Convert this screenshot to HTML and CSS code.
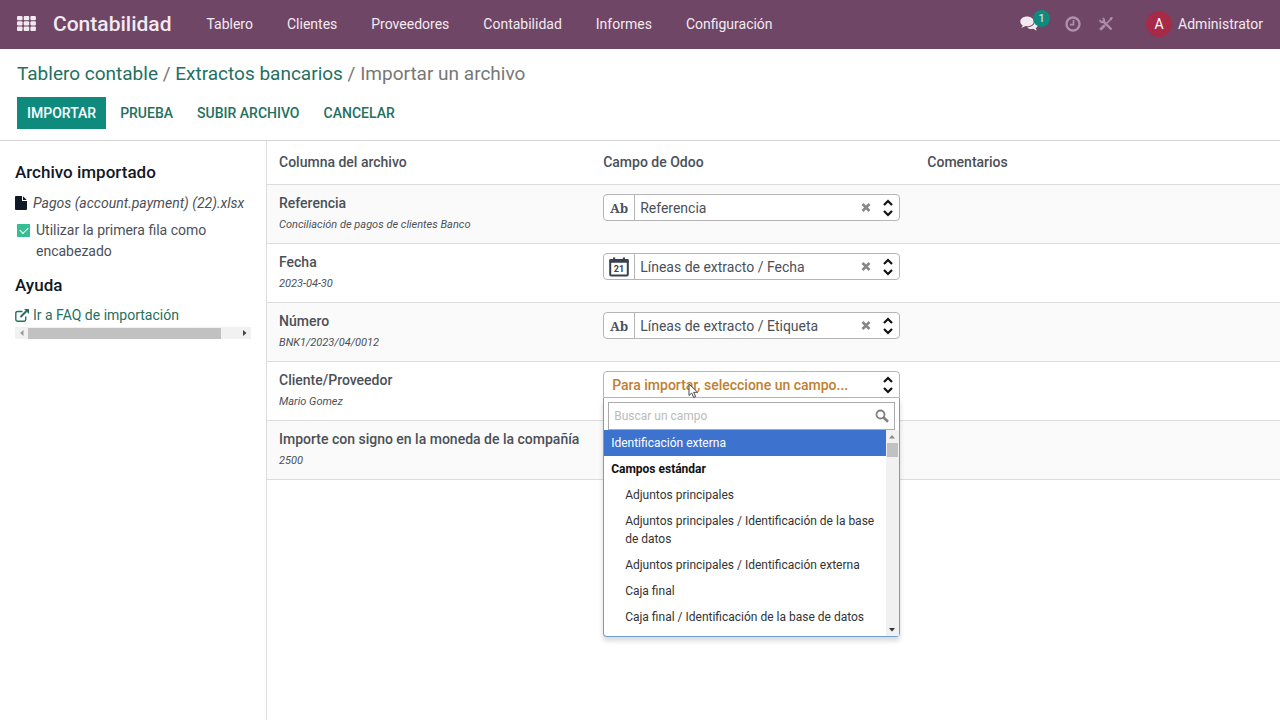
FILE: index.html
```html
<!DOCTYPE html>
<html lang="es">
<head>
    <meta charset="UTF-8">
    <meta name="viewport" content="width=device-width, initial-scale=1.0">
    <title>Importar un archivo</title>
    <link rel="stylesheet" href="styles.css">
</head>
<body>
    <header class="navbar">
        <button class="icon-btn apps-btn" aria-label="Aplicaciones">
            <svg width="19" height="15" viewBox="0 0 19 15" fill="currentColor">
                <rect x="0" y="0" width="5.500" height="4.300" rx="1"/><rect x="6.700" y="0" width="5.500" height="4.300" rx="1"/><rect x="13.400" y="0" width="5.500" height="4.300" rx="1"/>
                <rect x="0" y="5.300" width="5.500" height="4.300" rx="1"/><rect x="6.700" y="5.300" width="5.500" height="4.300" rx="1"/><rect x="13.400" y="5.300" width="5.500" height="4.300" rx="1"/>
                <rect x="0" y="10.600" width="5.500" height="4.300" rx="1"/><rect x="6.700" y="10.600" width="5.500" height="4.300" rx="1"/><rect x="13.400" y="10.600" width="5.500" height="4.300" rx="1"/>
            </svg>
        </button>
        <a class="brand" href="#">Contabilidad</a>
        <nav class="menu">
            <a href="#">Tablero</a>
            <a href="#">Clientes</a>
            <a href="#">Proveedores</a>
            <a href="#">Contabilidad</a>
            <a href="#">Informes</a>
            <a href="#">Configuración</a>
        </nav>
        <div class="systray">
            <button class="icon-btn chat-btn" aria-label="Mensajes">
                <svg width="18" height="15" viewBox="0 0 18 15" fill="currentColor">
                    <path d="M7 0.500C3.200 0.500 0.300 2.700 0.300 5.500c0 1.600 1 3 2.500 3.900-.3.900-.9 1.600-1.600 2.200 1.700 0 3.200-.7 4.300-1.500.5.1 1 .1 1.500.1 3.800 0 6.800-2.100 6.800-4.800S10.800.5 7 .5z"/>
                    <path d="M14.800 5.300c.2 3.400-3.300 6-7.600 6.100 1.100 1 2.800 1.500 4.700 1.500.5 0 .9 0 1.300-.1 1 .9 2.400 1.500 3.900 1.500-.6-.6-1.100-1.300-1.400-2.100 1.300-.8 2.100-1.900 2.100-3.200 0-1.500-1.200-2.900-3-3.700z"/>
                </svg>
                <span class="badge">1</span>
            </button>
            <button class="icon-btn muted clock-btn" aria-label="Actividades">
                <svg width="16" height="16" viewBox="0 0 16 16" fill="none" stroke="currentColor">
                    <circle cx="8" cy="8" r="6.500" stroke-width="2.400"/>
                    <path d="M8.500 4v4.700H5" stroke-width="1.700"/>
                </svg>
            </button>
            <button class="icon-btn muted tools-btn" aria-label="Herramientas">
                <svg width="14" height="14" viewBox="0 0 14 14" fill="none" stroke="currentColor">
                    <path d="M3.500 3.500L12.500 12.500" stroke-width="2.400"/>
                    <path d="M1 2.800a2.500 2.500 0 0 0 3.600 2.400A2.500 2.500 0 0 0 3.600 1" stroke-width="1.700"/>
                    <path d="M1.200 12.800L5.500 8.500" stroke-width="2.800"/>
                    <path d="M5.500 8.500L12 2M10.800 1.600l2-.8-.6 2.200" stroke-width="1.500"/>
                </svg>
            </button>
            <button class="user-btn"><span class="avatar">A</span>Administrator</button>
        </div>
    </header>

    <div class="control-panel">
        <nav class="breadcrumb">
            <a href="#">Tablero contable</a> / <a href="#">Extractos bancarios</a> / <span>Importar un archivo</span>
        </nav>
        <div class="actions">
            <button class="btn btn-primary">Importar</button>
            <button class="btn">Prueba</button>
            <button class="btn">Subir archivo</button>
            <button class="btn">Cancelar</button>
        </div>
    </div>

    <div class="content">
        <aside class="sidebar">
            <h2>Archivo importado</h2>
            <div class="file">
                <svg width="12" height="14" viewBox="0 0 12 14" fill="#111827">
                    <path d="M0 1Q0 0 1 0H7V4.500Q7 5 7.500 5H12V13Q12 14 11 14H1Q0 14 0 13zM8 0.300L11.700 4H8z"/>
                </svg>
                <em>Pagos (account.payment) (22).xlsx</em>
            </div>
            <div class="check">
                <input type="checkbox" id="headers" checked>
                <label for="headers">Utilizar la primera fila como encabezado</label>
            </div>
            <h2>Ayuda</h2>
            <a class="faq" href="#">
                <svg width="14" height="13" viewBox="0 0 14 13" fill="none" stroke="currentColor" stroke-width="1.400">
                    <path d="M7.500 2.500H2.500Q.8 2.500.8 4.200V10.500Q.8 12.200 2.500 12.200H9Q10.700 12.200 10.700 10.500V7.500"/>
                    <path d="M5.500 8L11.500 2" stroke-width="1.900"/>
                    <path d="M9 0H14V5z" fill="currentColor" stroke="none"/>
                </svg>
                Ir a FAQ de importación
            </a>
            <div class="scroll-x">
                <svg width="13" height="12" viewBox="0 0 13 12"><path d="M8.500 3v6L5 6z" fill="#999"/></svg>
                <span class="thumb"></span>
                <svg width="13" height="12" viewBox="0 0 13 12"><path d="M5 3v6l3.500-3z" fill="#444"/></svg>
            </div>
        </aside>

        <main class="mapping">
            <table>
                <thead>
                    <tr>
                        <th>Columna del archivo</th>
                        <th>Campo de Odoo</th>
                        <th>Comentarios</th>
                    </tr>
                </thead>
                <tbody>
                    <tr>
                        <td><label for="f1">Referencia</label><em>Conciliación de pagos de clientes Banco</em></td>
                        <td>
                            <div class="field">
                                <span class="type">Ab</span>
                                <select id="f1"><option>Referencia</option></select>
                                <button class="clear" aria-label="Quitar"><svg width="10" height="9" viewBox="0 0 10 9"><path d="M1.500 1l7 7M8.500 1l-7 7" stroke="#888" stroke-width="2.600"/></svg></button>
                                <svg class="arrows" width="10" height="18" viewBox="0 0 10 18"><path d="M1 6l4-4 4 4M1 12l4 4 4-4" fill="none" stroke="#111" stroke-width="2.200"/></svg>
                            </div>
                        </td>
                        <td></td>
                    </tr>
                    <tr>
                        <td><label for="f2">Fecha</label><em>2023-04-30</em></td>
                        <td>
                            <div class="field">
                                <span class="type">
                                    <svg width="20" height="20" viewBox="0 0 20 20">
                                        <rect x="1.200" y="3" width="17.600" height="15.500" rx="1" fill="none" stroke="#374151" stroke-width="2"/>
                                        <path d="M0.500 2.200h19v3.600H0.500zM4 0.500h2.200v3H4zM13.800 0.500H16v3h-2.200z" fill="#374151"/>
                                        <text x="10" y="15" class="cal-day">21</text>
                                    </svg>
                                </span>
                                <select id="f2"><option>Líneas de extracto / Fecha</option></select>
                                <button class="clear" aria-label="Quitar"><svg width="10" height="9" viewBox="0 0 10 9"><path d="M1.500 1l7 7M8.500 1l-7 7" stroke="#888" stroke-width="2.600"/></svg></button>
                                <svg class="arrows" width="10" height="18" viewBox="0 0 10 18"><path d="M1 6l4-4 4 4M1 12l4 4 4-4" fill="none" stroke="#111" stroke-width="2.200"/></svg>
                            </div>
                        </td>
                        <td></td>
                    </tr>
                    <tr>
                        <td><label for="f3">Número</label><em>BNK1/2023/04/0012</em></td>
                        <td>
                            <div class="field">
                                <span class="type">Ab</span>
                                <select id="f3"><option>Líneas de extracto / Etiqueta</option></select>
                                <button class="clear" aria-label="Quitar"><svg width="10" height="9" viewBox="0 0 10 9"><path d="M1.500 1l7 7M8.500 1l-7 7" stroke="#888" stroke-width="2.600"/></svg></button>
                                <svg class="arrows" width="10" height="18" viewBox="0 0 10 18"><path d="M1 6l4-4 4 4M1 12l4 4 4-4" fill="none" stroke="#111" stroke-width="2.200"/></svg>
                            </div>
                        </td>
                        <td></td>
                    </tr>
                    <tr>
                        <td><label for="f4">Cliente/Proveedor</label><em>Mario Gomez</em></td>
                        <td>
                            <div class="field open">
                                <select id="f4"><option>Para importar, seleccione un campo...</option></select>
                                <svg class="arrows" width="10" height="18" viewBox="0 0 10 18"><path d="M1 6l4-4 4 4M1 12l4 4 4-4" fill="none" stroke="#111" stroke-width="2.200"/></svg>
                                <svg class="cursor" width="11" height="16" viewBox="0 0 11 16"><path d="M1 1v11.500l2.700-2.500 2 4.500 2-.9-2-4.300H9.700z" fill="#fff" stroke="#444" stroke-width="1"/></svg>
                                <div class="dropdown">
                                    <div class="search">
                                        <input type="text" placeholder="Buscar un campo" aria-label="Buscar un campo">
                                        <svg width="14" height="14" viewBox="0 0 14 14" fill="none" stroke="#808080"><circle cx="5.500" cy="5.500" r="4" stroke-width="1.800"/><path d="M8.500 8.500L13 12.800" stroke-width="2.600"/></svg>
                                    </div>
                                    <div class="results">
                                        <ul>
                                            <li class="selected">Identificación externa</li>
                                            <li class="group">Campos estándar</li>
                                            <li class="sub">Adjuntos principales</li>
                                            <li class="sub">Adjuntos principales / Identificación de la base de datos</li>
                                            <li class="sub">Adjuntos principales / Identificación externa</li>
                                            <li class="sub">Caja final</li>
                                            <li class="sub">Caja final / Identificación de la base de datos</li>
                                        </ul>
                                        <div class="scroll-y">
                                            <svg width="12" height="13" viewBox="0 0 12 13"><path d="M3 8.500h6L6 5z" fill="#888"/></svg>
                                            <span class="thumb"></span>
                                            <svg width="12" height="13" viewBox="0 0 12 13"><path d="M3 5h6L6 8.500z" fill="#333"/></svg>
                                        </div>
                                    </div>
                                </div>
                            </div>
                        </td>
                        <td></td>
                    </tr>
                    <tr>
                        <td><label for="f5">Importe con signo en la moneda de la compañía</label><em>2500</em></td>
                        <td>
                            <div class="field">
                                <select id="f5" class="empty"><option>Para importar, seleccione un campo...</option></select>
                            </div>
                        </td>
                        <td></td>
                    </tr>
                </tbody>
            </table>
        </main>
    </div>
</body>
</html>
```
FILE: styles.css
```css
* {
    box-sizing: border-box;
}
body {
    margin: 0;
    min-height: 100vh;
    display: flex;
    flex-direction: column;
    font-family: Roboto, "Liberation Sans", sans-serif;
    font-size: 14px;
    line-height: 20px;
    color: #4b5058;
    background: #fff;
}
a {
    color: #24705f;
    text-decoration: none;
}
button, input, select {
    font: inherit;
    color: inherit;
}
button {
    border: none;
    background: none;
    padding: 0;
    cursor: pointer;
}
svg {
    display: block;
    flex: none;
}

/* top bar */
.navbar {
    display: flex;
    align-items: center;
    height: 49px;
    padding: 0 17px 2px;
    background: #6f4665;
    color: #f3eaf1;
}
.navbar a {
    color: inherit;
}
.brand {
    margin-left: 17px;
    font-size: 21px;
    font-weight: 500;
}
.menu {
    display: flex;
    gap: 34px;
    margin-left: 35px;
}
.systray {
    display: flex;
    align-items: center;
    margin-left: auto;
}
.chat-btn {
    position: relative;
}
.badge {
    position: absolute;
    left: 13px;
    top: -6px;
    width: 17px;
    height: 17px;
    border-radius: 9px;
    background: #0f8b7e;
    font-size: 11px;
    line-height: 17px;
}
.muted {
    color: #b08fab;
}
.clock-btn {
    margin-left: 27px;
}
.tools-btn {
    margin-left: 18px;
}
.user-btn {
    display: flex;
    align-items: center;
    gap: 6px;
    margin-left: 33px;
}
.avatar {
    width: 26px;
    height: 26px;
    border-radius: 50%;
    background: #a72a48;
    color: #fff;
    line-height: 26px;
}

/* breadcrumb and actions */
.control-panel {
    padding: 12px 17px 11px;
    border-bottom: 1px solid #d5d5d5;
}
.breadcrumb {
    font-size: 19px;
    line-height: 26px;
    color: #777;
}
.actions {
    display: flex;
    gap: 4px;
    margin-top: 10px;
}
.btn {
    height: 32px;
    padding: 0 10px;
    font-weight: 500;
    text-transform: uppercase;
    color: #24705f;
}
.btn-primary {
    background: #0f8b7e;
    color: #fff;
}

.content {
    display: flex;
    flex: 1;
}

/* sidebar */
.sidebar {
    width: 266px;
    padding: 20px 15px;
}
h2 {
    margin: 0;
    font-size: 17px;
    line-height: 22px;
    font-weight: 500;
    color: #111827;
}
.file {
    display: flex;
    align-items: center;
    gap: 6px;
    margin-top: 10px;
    white-space: nowrap;
}
.check {
    display: flex;
    gap: 6px;
    margin: 7px 0 12px 2px;
    line-height: 21px;
}
.check input {
    appearance: none;
    flex: none;
    width: 13px;
    height: 13px;
    margin: 4px 0 0;
    background: #35bf93;
    position: relative;
}
.check input::after {
    content: "";
    position: absolute;
    left: 3px;
    top: 3px;
    width: 7px;
    height: 4px;
    border-left: 1px solid #fff;
    border-bottom: 1px solid #fff;
    transform: rotate(-45deg);
}
.faq {
    display: flex;
    align-items: center;
    gap: 4px;
    margin-top: 9px;
}
.scroll-x {
    display: flex;
    align-items: center;
    margin-top: 2px;
    background: #f1f1f1;
}
.scroll-x .thumb {
    flex: 1;
    height: 11px;
    margin-right: 17px;
    background: #c1c1c1;
}

/* mapping table */
.mapping {
    flex: 1;
    border-left: 1px solid #ddd;
}
table {
    width: 100%;
    border-collapse: collapse;
    table-layout: fixed;
}
th, td {
    padding: 8px 15px 8px 12px;
    text-align: left;
    vertical-align: top;
    border-bottom: 1px solid #dcdcdc;
}
th {
    width: 32%;
    padding-top: 11px;
    padding-bottom: 12px;
    font-weight: 500;
}
th:last-child {
    width: auto;
}
tbody tr:nth-child(odd) {
    background: #fafafa;
}
td label {
    display: block;
    line-height: 21px;
    font-weight: 500;
    white-space: nowrap;
}
td em {
    display: block;
    font-size: 11px;
    line-height: 21px;
}
.field {
    display: flex;
    align-items: center;
    position: relative;
    height: 27px;
    margin-top: 1px;
    padding-right: 6px;
    border: 1px solid #b5b5b5;
    border-radius: 4px;
    background: #fff;
}
.type {
    display: flex;
    align-items: center;
    justify-content: center;
    align-self: stretch;
    width: 31px;
    border-right: 1px solid #b5b5b5;
    font-family: "Noto Serif", "DejaVu Serif", "Liberation Serif", serif;
    font-size: 13px;
    font-weight: bold;
}
.cal-day {
    font: bold 9px Roboto, sans-serif;
    text-anchor: middle;
    fill: #374151;
}
.field select {
    appearance: none;
    flex: 1;
    min-width: 0;
    padding: 0 5px;
    border: none;
    background: none;
}
.clear {
    margin-right: 12px;
}
.open {
    border-radius: 4px 4px 0 0;
}
.open select, .field .empty {
    padding: 0 8px;
    font-weight: 500;
    color: #c08030;
}
.cursor {
    position: absolute;
    left: 84px;
    top: 11px;
}
.dropdown {
    position: absolute;
    z-index: 10;
    top: 26px;
    left: -1px;
    right: -1px;
    border: 1px solid #6f9fd0;
    border-top: none;
    border-radius: 0 0 4px 4px;
    background: #fff;
    box-shadow: 0 4px 5px rgba(0, 0, 0, 0.15);
    font-size: 12px;
    line-height: 18px;
    color: #333;
}
.search {
    display: flex;
    align-items: center;
    height: 28px;
    margin: 4px 4px 0;
    padding: 0 5px;
    border: 1px solid #aaa;
}
.search input {
    flex: 1;
    min-width: 0;
    padding: 0;
    border: none;
    outline: none;
}
.search input::placeholder {
    color: #bbb;
}
.results {
    display: flex;
}
.results ul {
    flex: 1;
    margin: 0;
    padding: 0 0 6px;
    list-style: none;
}
.results li {
    padding: 4px 7px;
}
.results .selected {
    background: #3d73cf;
    color: #fff;
}
.results .group {
    font-weight: bold;
    color: #111;
}
.results .sub {
    padding-left: 21px;
}
.scroll-y {
    display: flex;
    flex-direction: column;
    width: 13px;
    background: #f1f1f1;
}
.scroll-y .thumb {
    height: 14px;
    margin: 0 1px auto;
    background: #c1c1c1;
}
```
